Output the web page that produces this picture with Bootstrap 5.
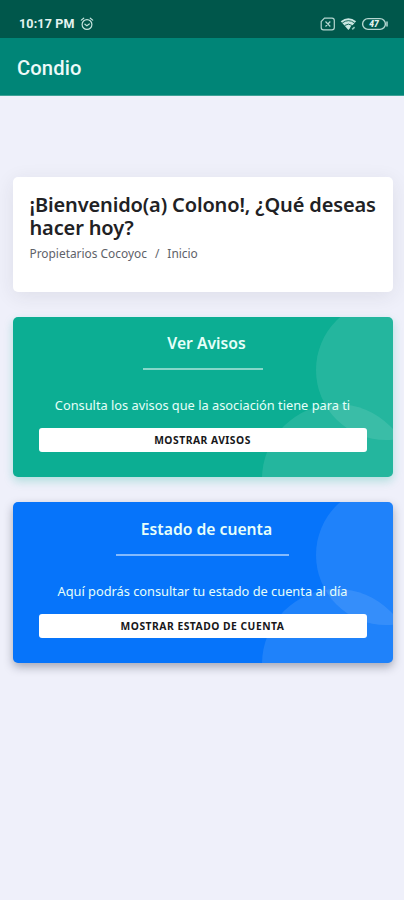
<!DOCTYPE html>
<html lang="es">
<head>
<meta charset="utf-8">
<meta name="viewport" content="width=device-width, initial-scale=1">
<title>Condio</title>
<link href="https://cdn.jsdelivr.net/npm/bootstrap@5.3.0/dist/css/bootstrap.min.css" rel="stylesheet">
<style>
body{background:#eff0fa;font-family:"Noto Sans",sans-serif;min-height:900px;overflow:hidden}
.status-bar{height:38px;background:#00574b;color:#e4f3f0;padding:10px 15px 0 19px;font:700 12.5px/28px Roboto,sans-serif}
.status-bar svg{display:block}
.clock{letter-spacing:.15px}
.app-bar{height:58px;background:#008577;padding:0 17px;border-bottom:1px solid #3fa196}
.app-title{font:500 20.2px/1 Roboto,sans-serif;color:#eefaf8;letter-spacing:.1px;padding-top:3px}
.panels{padding:81px 11.5px 0 12.5px}
.panel{border:0;border-radius:5px}
.welcome{height:115px;padding:17px 0 0 17px;margin-bottom:25px;box-shadow:0 4px 20px rgba(40,40,50,.09)}
.welcome h1{font-size:20px;line-height:22.5px;font-weight:600;letter-spacing:-.14px;color:#212124;white-space:nowrap;margin:0 0 5px}
.crumbs{font-size:11.9px;line-height:18px;color:#606269}
.tile{height:160px;margin-bottom:25px;overflow:hidden;color:#e6fff9;padding:0 26px;text-align:center}
.tile::before,.tile::after{content:"";position:absolute;border-radius:50%;background:rgba(255,255,255,.1)}
.tile::before{width:140px;height:140px;left:303px;top:-17px}
.tile::after{width:150px;height:150px;left:249px;top:87px}
.tile>*{position:relative;z-index:1}
.tile-green{background:#0cae93;box-shadow:0 4px 10px rgba(12,174,147,.28)}
.tile-blue{background:#0674fa;height:161px;padding-top:1px;box-shadow:0 4px 10px rgba(20,25,50,.34)}
.tile h2{font-size:15.7px;line-height:22px;font-weight:600;margin:15px 0 14px;padding-left:8px;white-space:nowrap}
.rule{height:2px;background:rgba(255,255,255,.5);width:120px;margin:0 auto}
.rule-wide{width:173px}
.tile p{font-size:12.8px;line-height:20px;margin:25px -10px 13px;white-space:nowrap}
.tile .btn{height:24px;padding:0;border:0;border-radius:3px;background:#fff;color:#17171a;font-size:10.3px;line-height:24px;font-weight:700;letter-spacing:.5px}
</style>
</head>
<body>
<header>
<div class="status-bar d-flex justify-content-between align-items-center">
<div class="d-flex align-items-center"><span class="clock">10:17 PM</span>
<svg class="ms-1" width="16" height="14" viewBox="-1.5 0 16 14" fill="none" stroke="#c4e4de" stroke-width="1.2" stroke-linecap="round"><circle cx="6.5" cy="7.5" r="4.9"/><path d="M.8 3.1 3.2 1.2M12.2 3.1 9.8 1.2M4.4 7.2l2 1.5 2.4-1.8"/></svg></div>
<div class="d-flex align-items-center">
<svg width="16" height="14" viewBox="0 0 16 14" fill="none" stroke="#b4d6d0" stroke-width="1.2"><path d="M4.5 1.2H12a2.3 2.3 0 0 1 2.3 2.3v7a2.3 2.3 0 0 1-2.3 2.3H3.5a2.3 2.3 0 0 1-2.3-2.3v-6zM5.5 4.5l4.8 5M10.3 4.5l-4.8 5"/></svg>
<svg class="ms-1" width="17" height="14" viewBox="0 0 17 14"><path d="M.7 4.3Q8.4-2 16.1 4.3L8.4 13z" fill="#c9e6e1"/><path d="M2.3 5.9q6.1-4.5 12.2 0M4.6 8.5q3.8-2.8 7.6 0" fill="none" stroke="#00574b" stroke-width=".9"/><circle cx="13.3" cy="11.3" r="3" fill="#00574b"/><path d="m12.2 12.4 2.4-2.2" stroke="#8fc5bc" stroke-width="1.6"/></svg>
<svg class="ms-1" width="28" height="14" viewBox="0 0 28 14"><rect x="1.6" y="1.6" width="22.8" height="10.8" rx="5.4" fill="none" stroke="#b4d6d0" stroke-width="1.4"/><path d="M26 5v4" stroke="#b4d6d0" stroke-width="1.5" stroke-linecap="round"/><text x="13" y="10" text-anchor="middle" font-family="Roboto" font-size="8.5" font-weight="900" font-style="italic" fill="#e4f3f0">47</text></svg>
</div></div>
<nav class="app-bar d-flex align-items-center"><span class="app-title">Condio</span></nav>
</header>
<main class="panels">
<section class="card panel welcome"><h1>¡Bienvenido(a) Colono!, ¿Qué deseas<br>hacer hoy?</h1>
<div class="crumbs d-flex gap-2"><span>Propietarios Cocoyoc</span><span>/</span><span>Inicio</span></div></section>
<section class="card panel tile tile-green"><h2>Ver Avisos</h2><div class="rule"></div><p>Consulta los avisos que la asociación tiene para ti</p><button class="btn w-100">MOSTRAR AVISOS</button></section>
<section class="card panel tile tile-blue"><h2>Estado de cuenta</h2><div class="rule rule-wide"></div><p>Aquí podrás consultar tu estado de cuenta al día</p><button class="btn w-100">MOSTRAR ESTADO DE CUENTA</button></section>
</main>
<script src="https://cdn.jsdelivr.net/npm/bootstrap@5.3.0/dist/js/bootstrap.bundle.min.js"></script>
</body>
</html>
